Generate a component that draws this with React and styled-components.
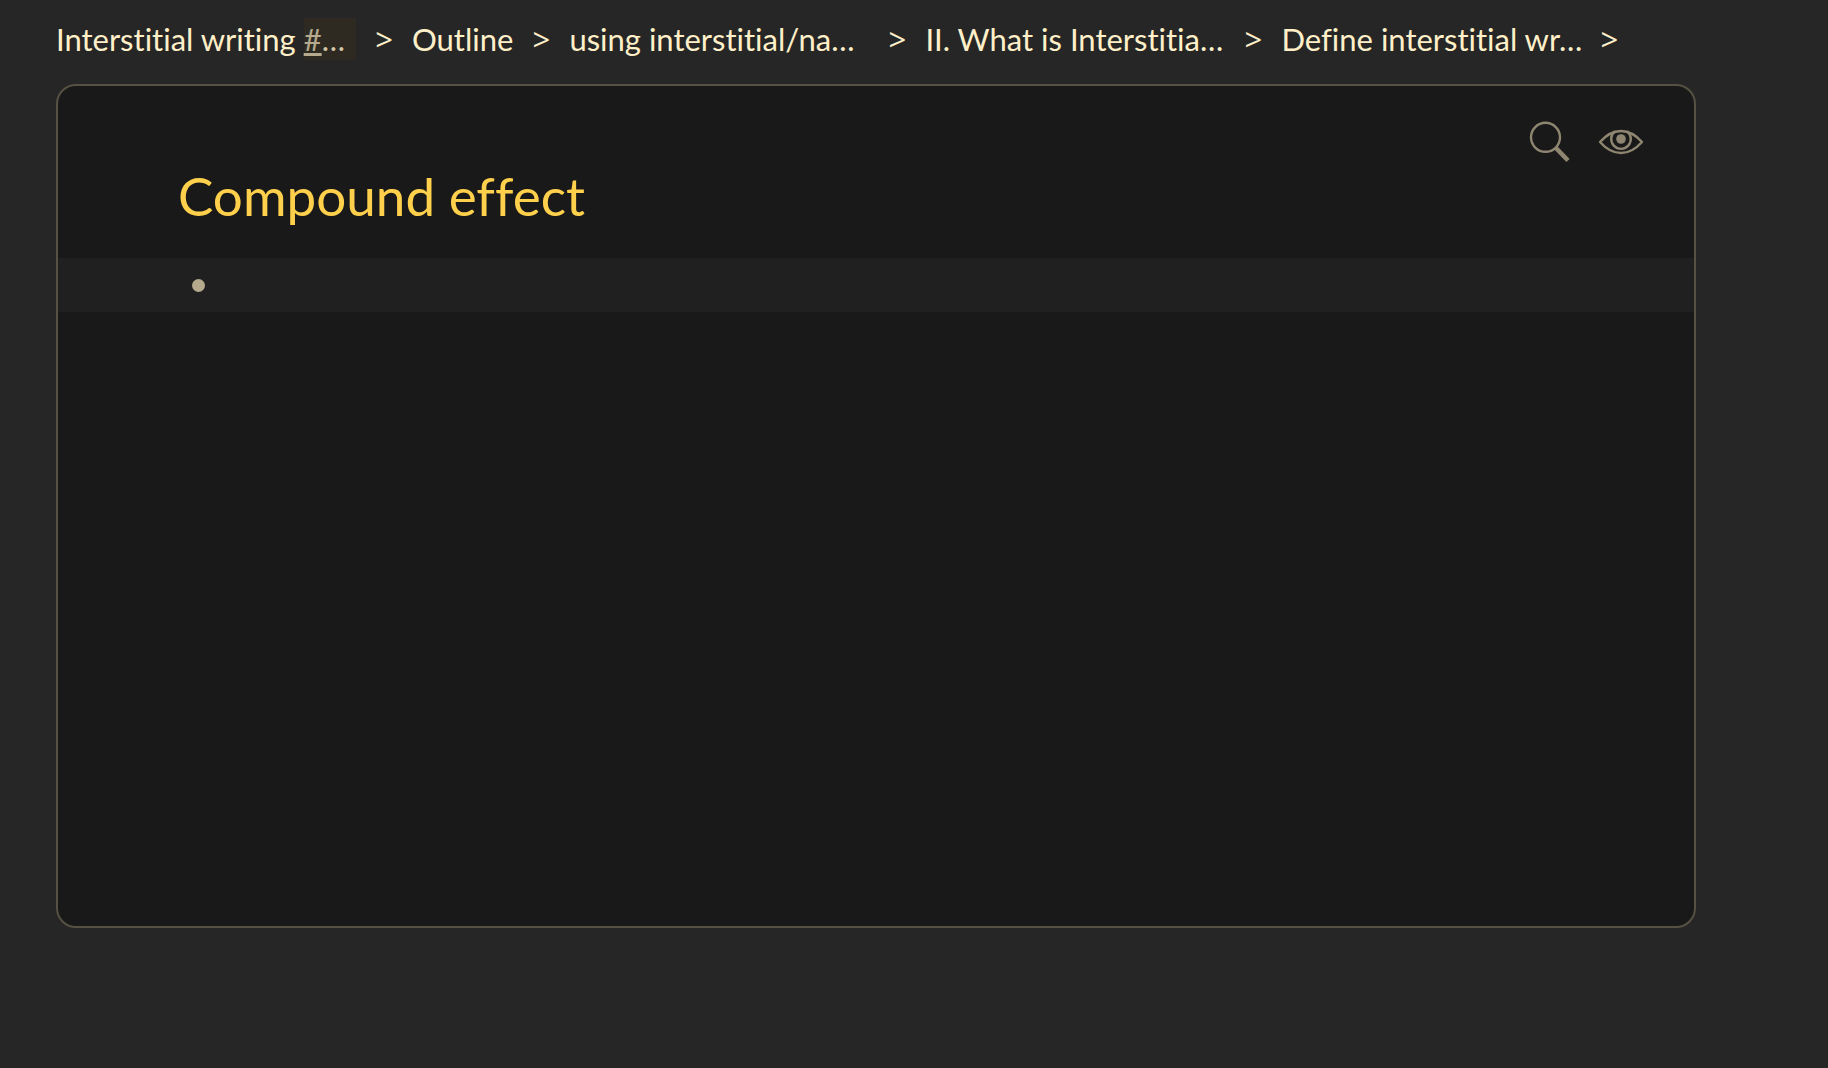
import React from 'react';
import styled, { createGlobalStyle } from 'styled-components';

const GlobalStyle = createGlobalStyle`
  * {
    box-sizing: border-box;
  }

  body {
    margin: 0;
    background: #262626;
    color: #fff0c9;
    font-family: Lato, 'Open Sans', sans-serif;
    font-variant-ligatures: none;
  }
`;

const Page = styled.div`
  display: flex;
  flex-direction: column;
  min-height: 100vh;
  padding: 18px 132px 140px 56px;
`;

const Breadcrumbs = styled.nav`
  display: flex;
  align-items: center;
  height: 42px;
  margin-bottom: 24px;
  font-size: 31px;
  line-height: 42px;
  white-space: nowrap;
`;

const Crumb = styled.a`
  flex: none;
  display: flex;
  width: ${props => (props.$clipped ? '300px' : 'auto')};
  color: inherit;
  text-decoration: none;
  white-space: pre;
`;

const Tag = styled.span`
  flex: 1;
  background: #2e2a22;
  color: #d3c6a6;
`;

const Hash = styled.span`
  color: #b5aa8e;
  text-decoration: underline;
`;

const Separator = styled.span`
  flex: none;
  width: 56px;
  font-family: 'Open Sans', sans-serif;
  text-align: center;
`;

const Panel = styled.main`
  flex: 1;
  background: #191919;
  border: 2px solid #565143;
  border-radius: 20px;
`;

const Toolbar = styled.div`
  display: flex;
  justify-content: flex-end;
  gap: 24px;
  height: 80px;
  padding: 32px 48px 0 0;
`;

const IconButton = styled.button`
  width: 48px;
  height: 48px;
  padding: 0;
  border: 0;
  background: none;
  color: #8f8671;
  cursor: pointer;
`;

const Title = styled.h1`
  margin: 0;
  padding: 0 120px;
  color: #ffd04b;
  font-size: 53px;
  font-weight: 400;
  line-height: 60px;
`;

const Outline = styled.ul`
  margin: 32px 0 0;
  padding: 0;
  list-style: none;
`;

const Item = styled.li`
  display: flex;
  align-items: center;
  height: 54px;
  padding-left: 134px;
  background: #202020;
`;

const Bullet = styled.span`
  width: 13px;
  height: 13px;
  border-radius: 50%;
  background: #b5aa8e;
`;

const crumbs = [
  { text: 'Interstitial writing ', tagged: true, clipped: true },
  { text: 'Outline' },
  { text: 'using interstitial/na…', clipped: true },
  { text: 'II. What is Interstitia…', clipped: true },
  { text: 'Define interstitial wr…', clipped: true }
];

const SearchIcon = () => (
  <svg width="48" height="48" viewBox="0 0 48 48" fill="none" stroke="currentColor">
    <circle cx="19.5" cy="19.3" r="14.5" strokeWidth="2.4" />
    <path d="M29.5 29.5L42 42.5" strokeWidth="4.6" />
  </svg>
);

const EyeIcon = () => (
  <svg width="48" height="48" viewBox="0 0 48 48" fill="none" stroke="currentColor" strokeWidth="2.4">
    <path d="M2 24C15 9.3 31 9.3 44 24C31 38.7 15 38.7 2 24Z" strokeLinejoin="round" />
    <path d="M17 13.3A9.8 9.8 0 1 0 29 13.3" />
    <circle cx="23" cy="21" r="4.8" fill="currentColor" stroke="none" />
  </svg>
);

const App = () => (
  <>
    <GlobalStyle />
    <Page>
      <Breadcrumbs aria-label="Breadcrumb">
        {crumbs.map(crumb => (
          <React.Fragment key={crumb.text}>
            <Crumb href="#" $clipped={crumb.clipped}>
              {crumb.text}
              {crumb.tagged && <Tag><Hash>#</Hash>…</Tag>}
            </Crumb>
            <Separator>&gt;</Separator>
          </React.Fragment>
        ))}
      </Breadcrumbs>
      <Panel>
        <Toolbar>
          <IconButton aria-label="Search"><SearchIcon /></IconButton>
          <IconButton aria-label="Visibility"><EyeIcon /></IconButton>
        </Toolbar>
        <Title>Compound effect</Title>
        <Outline>
          <Item><Bullet /></Item>
        </Outline>
      </Panel>
    </Page>
  </>
);

export default App;
